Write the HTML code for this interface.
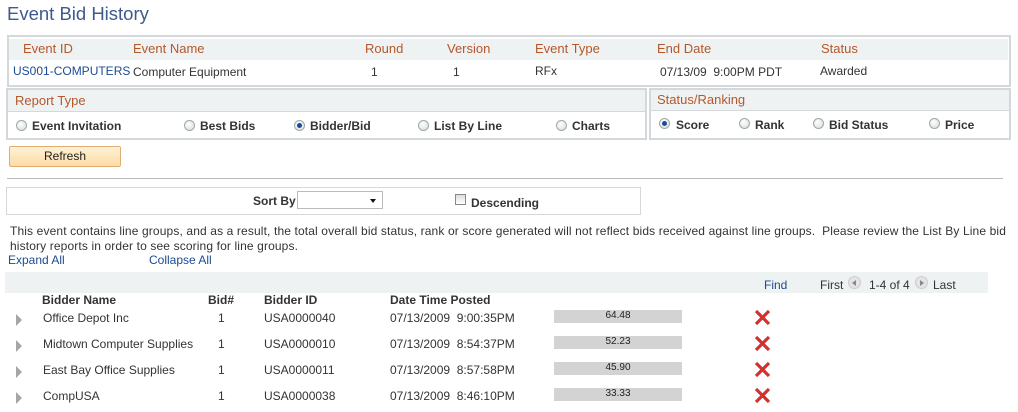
<!DOCTYPE html>
<html><head><meta charset="utf-8"><style>
body{margin:0;width:1018px;height:412px;background:#fff;font-family:"Liberation Sans",Arial,sans-serif;font-size:12px;color:#333;position:relative;overflow:hidden}
.a{position:absolute;white-space:nowrap}
.h{color:#b3582a;font-size:13px}
.lnk{color:#1b4b93}
.box{position:absolute;border:1px solid #d4d8db;box-sizing:border-box}
.band{position:absolute;background:#eff2f3}
.b{font-weight:bold}
.rad{position:absolute;width:11px;height:11px;border-radius:50%;border:1px solid #9aa;background:radial-gradient(circle at 40% 35%,#fff,#d8d8d8);box-sizing:border-box}
.rad.on::after{content:"";position:absolute;left:2px;top:2px;width:5px;height:5px;border-radius:50%;background:#1a4a9a}
.tri{position:absolute;width:0;height:0;border-left:6px solid #a6a6a6;border-top:6px solid transparent;border-bottom:6px solid transparent}
.bar{position:absolute;left:554px;width:128px;height:13px;background:#d3d3d3;font-size:10px;text-align:center;line-height:12px;color:#222}
</style></head><body>
<div class="a" style="left:7px;top:3px;font-size:18.5px;color:#3e5a8c">Event Bid History</div>

<div class="box" style="left:7px;top:35px;width:1004px;height:52px;border-width:2px"></div>
<div class="band" style="left:9px;top:39px;width:999px;height:21px"></div>
<div class="a h" style="left:23px;top:41px">Event ID</div>
<div class="a h" style="left:133px;top:41px">Event Name</div>
<div class="a h" style="left:365px;top:41px">Round</div>
<div class="a h" style="left:447px;top:41px">Version</div>
<div class="a h" style="left:535px;top:41px">Event Type</div>
<div class="a h" style="left:657px;top:41px">End Date</div>
<div class="a h" style="left:821px;top:41px">Status</div>
<div class="a lnk" style="left:13px;top:64px">US001-COMPUTERS</div>
<div class="a" style="left:133px;top:65px">Computer Equipment</div>
<div class="a" style="left:371px;top:65px">1</div>
<div class="a" style="left:453px;top:65px">1</div>
<div class="a" style="left:535px;top:64px">RFx</div>
<div class="a" style="left:660px;top:65px">07/13/09&nbsp; 9:00PM PDT</div>
<div class="a" style="left:820px;top:64px">Awarded</div>

<div class="box" style="left:6px;top:88px;width:641px;height:52px;border-width:2px"></div>
<div class="band" style="left:8px;top:90px;width:637px;height:21px;border-bottom:1px solid #d4d8db"></div>
<div class="a h" style="left:15px;top:93px">Report Type</div>
<div class="rad" style="left:16px;top:120px"></div><div class="a b" style="left:32px;top:119px">Event Invitation</div>
<div class="rad" style="left:184px;top:120px"></div><div class="a b" style="left:200px;top:119px">Best Bids</div>
<div class="rad on" style="left:294px;top:120px"></div><div class="a b" style="left:310px;top:119px">Bidder/Bid</div>
<div class="rad" style="left:418px;top:120px"></div><div class="a b" style="left:434px;top:119px">List By Line</div>
<div class="rad" style="left:556px;top:120px"></div><div class="a b" style="left:572px;top:119px">Charts</div>

<div class="box" style="left:649px;top:88px;width:362px;height:52px;border-width:2px"></div>
<div class="band" style="left:651px;top:90px;width:358px;height:20px;border-bottom:1px solid #d4d8db"></div>
<div class="a h" style="left:657px;top:92px">Status/Ranking</div>
<div class="rad on" style="left:659px;top:118px"></div><div class="a b" style="left:676px;top:118px">Score</div>
<div class="rad" style="left:739px;top:118px"></div><div class="a b" style="left:755px;top:118px">Rank</div>
<div class="rad" style="left:813px;top:118px"></div><div class="a b" style="left:829px;top:118px">Bid Status</div>
<div class="rad" style="left:929px;top:118px"></div><div class="a b" style="left:945px;top:118px">Price</div>

<div class="a" style="left:9px;top:146px;width:110px;height:19px;border:1px solid #e1ae72;border-radius:2px;background:linear-gradient(#fff1d6,#fbdca6);text-align:center;line-height:19px;font-size:12px;color:#222">Refresh</div>

<div class="a" style="left:7px;top:178px;width:996px;height:1px;background:#b8b8b8"></div>

<div class="box" style="left:6px;top:187px;width:635px;height:28px"></div>
<div class="a b" style="left:253px;top:194px">Sort By</div>
<div class="a" style="left:297px;top:191px;width:86px;height:18px;border:1px solid #bbb;box-sizing:border-box;background:#fff"><div style="position:absolute;right:6px;top:7px;border-left:3px solid transparent;border-right:3px solid transparent;border-top:4px solid #111"></div></div>
<div class="a" style="left:455px;top:194px;width:11px;height:11px;border:1px solid #888;box-sizing:border-box;background:linear-gradient(#ddd,#fff)"></div>
<div class="a b" style="left:471px;top:196px">Descending</div>

<div class="a" style="left:10px;top:224px;letter-spacing:0.13px">This event contains line groups, and as a result, the total overall bid status, rank or score generated will not reflect bids received against line groups.&nbsp; Please review the List By Line bid</div>
<div class="a" style="left:10px;top:239px;letter-spacing:0.13px">history reports in order to see scoring for line groups.</div>
<div class="a lnk" style="left:8px;top:253px">Expand All</div>
<div class="a lnk" style="left:149px;top:253px">Collapse All</div>

<div class="band" style="left:5px;top:272px;width:983px;height:21px"></div>
<div class="a lnk" style="left:764px;top:278px">Find</div>
<div class="a" style="left:820px;top:278px">First</div>
<div class="a" style="left:848px;top:276px;width:13px;height:13px;border-radius:50%;background:#e4e4e4;border:1px solid #ccc;box-sizing:border-box"><div style="position:absolute;left:3px;top:3px;border-top:3px solid transparent;border-bottom:3px solid transparent;border-right:4px solid #888"></div></div>
<div class="a" style="left:869px;top:278px">1-4 of 4</div>
<div class="a" style="left:915px;top:276px;width:13px;height:13px;border-radius:50%;background:#e4e4e4;border:1px solid #ccc;box-sizing:border-box"><div style="position:absolute;left:4px;top:3px;border-top:3px solid transparent;border-bottom:3px solid transparent;border-left:4px solid #888"></div></div>
<div class="a" style="left:933px;top:278px">Last</div>

<div class="a b" style="left:42px;top:293px">Bidder Name</div>
<div class="a b" style="left:208px;top:293px">Bid#</div>
<div class="a b" style="left:264px;top:293px">Bidder ID</div>
<div class="a b" style="left:390px;top:293px">Date Time Posted</div>

<div class="tri" style="left:16px;top:314px"></div>
<div class="a" style="left:43px;top:311px">Office Depot Inc</div><div class="a" style="left:218px;top:311px">1</div><div class="a" style="left:264px;top:311px">USA0000040</div><div class="a" style="left:390px;top:311px">07/13/2009&nbsp; 9:00:35PM</div>
<div class="bar" style="top:310px">64.48</div>

<div class="tri" style="left:16px;top:340px"></div>
<div class="a" style="left:43px;top:337px">Midtown Computer Supplies</div><div class="a" style="left:218px;top:337px">1</div><div class="a" style="left:264px;top:337px">USA0000010</div><div class="a" style="left:390px;top:337px">07/13/2009&nbsp; 8:54:37PM</div>
<div class="bar" style="top:336px">52.23</div>

<div class="tri" style="left:16px;top:366px"></div>
<div class="a" style="left:43px;top:363px">East Bay Office Supplies</div><div class="a" style="left:218px;top:363px">1</div><div class="a" style="left:264px;top:363px">USA0000011</div><div class="a" style="left:390px;top:363px">07/13/2009&nbsp; 8:57:58PM</div>
<div class="bar" style="top:362px">45.90</div>

<div class="tri" style="left:16px;top:392px"></div>
<div class="a" style="left:43px;top:389px">CompUSA</div><div class="a" style="left:218px;top:389px">1</div><div class="a" style="left:264px;top:389px">USA0000038</div><div class="a" style="left:390px;top:389px">07/13/2009&nbsp; 8:46:10PM</div>
<div class="bar" style="top:388px">33.33</div>

<svg class="a" style="left:754px;top:309px" width="17" height="17"><path d="M2 2L15 15M15 2L2 15" stroke="#d3312f" stroke-width="3.2"/></svg>
<svg class="a" style="left:754px;top:335px" width="17" height="17"><path d="M2 2L15 15M15 2L2 15" stroke="#d3312f" stroke-width="3.2"/></svg>
<svg class="a" style="left:754px;top:361px" width="17" height="17"><path d="M2 2L15 15M15 2L2 15" stroke="#d3312f" stroke-width="3.2"/></svg>
<svg class="a" style="left:754px;top:387px" width="17" height="17"><path d="M2 2L15 15M15 2L2 15" stroke="#d3312f" stroke-width="3.2"/></svg>
</body></html>
